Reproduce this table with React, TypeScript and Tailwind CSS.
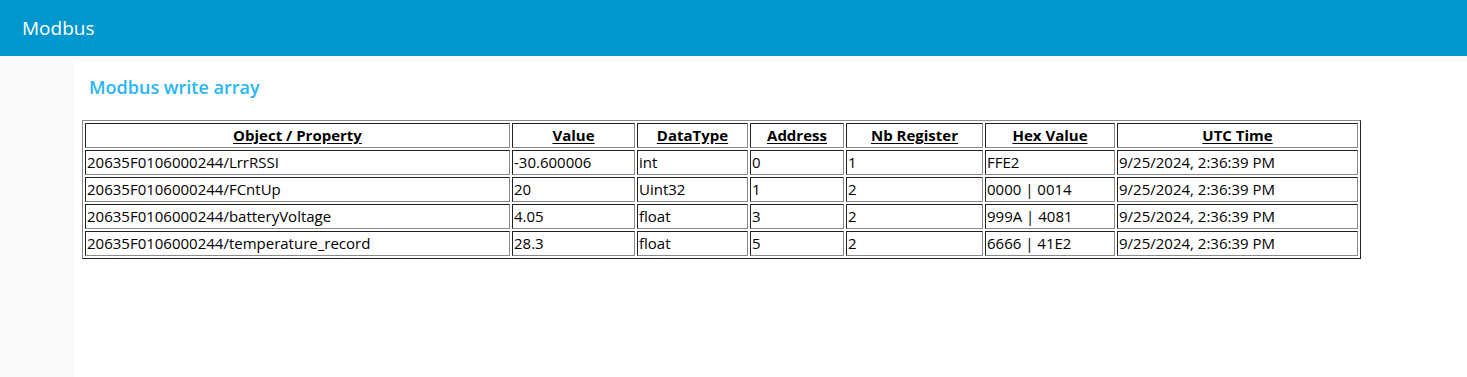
import React from "react";

interface ModbusRow {
  property: string;
  value: string;
  dataType: string;
  address: number;
  nbRegister: number;
  hex: string;
  time: string;
}

const rows: ModbusRow[] = [
  { property: "20635F0106000244/LrrRSSI", value: "-30.600006", dataType: "int", address: 0, nbRegister: 1, hex: "FFE2", time: "9/25/2024, 2:36:39 PM" },
  { property: "20635F0106000244/FCntUp", value: "20", dataType: "Uint32", address: 1, nbRegister: 2, hex: "0000 | 0014", time: "9/25/2024, 2:36:39 PM" },
  { property: "20635F0106000244/batteryVoltage", value: "4.05", dataType: "float", address: 3, nbRegister: 2, hex: "999A | 4081", time: "9/25/2024, 2:36:39 PM" },
  { property: "20635F0106000244/temperature_record", value: "28.3", dataType: "float", address: 5, nbRegister: 2, hex: "6666 | 41E2", time: "9/25/2024, 2:36:39 PM" },
];

const columns = [
  { label: "Object / Property", width: "w-[425px]" },
  { label: "Value", width: "w-[123px]" },
  { label: "DataType", width: "w-[111px]" },
  { label: "Address", width: "w-[94px]" },
  { label: "Nb Register", width: "w-[137px]" },
  { label: "Hex Value", width: "w-[130px]" },
  { label: "UTC Time", width: "w-[241px]" },
];

const cellClass =
  "border border-t-[#222] border-l-[#222] border-b-[#8a8a8a] border-r-[#8a8a8a] p-[1px] leading-[21px] align-middle";

export default function App() {
  return (
    <div className="min-h-[377px] bg-[#fafafa] font-['Open_Sans','Noto_Sans',sans-serif] text-black">
      <header className="flex h-[56px] items-center bg-[#0096ce] pl-[22px]">
        <h1 className="text-[19px] font-normal text-white">Modbus</h1>
      </header>

      <div className="flex">
        <aside className="w-[75px] shrink-0" />
        <main className="mt-[6px] min-h-[315px] flex-1 bg-white pl-[7px]">
          <h2 className="ml-[7px] mt-[12px] text-[18px] font-semibold text-[#29b6f6]">
            Modbus write array
          </h2>

          <table className="mt-[19px] table-fixed border-separate border-spacing-[2px] border border-t-[#8a8a8a] border-l-[#8a8a8a] border-b-[#222] border-r-[#222] text-[15px]">
            <thead>
              <tr>
                {columns.map((col) => (
                  <th
                    key={col.label}
                    className={`${cellClass} ${col.width} text-center font-bold underline underline-offset-2`}
                  >
                    {col.label}
                  </th>
                ))}
              </tr>
            </thead>
            <tbody>
              {rows.map((row) => (
                <tr key={row.property}>
                  <td className={cellClass}>{row.property}</td>
                  <td className={cellClass}>{row.value}</td>
                  <td className={cellClass}>{row.dataType}</td>
                  <td className={cellClass}>{row.address}</td>
                  <td className={cellClass}>{row.nbRegister}</td>
                  <td className={cellClass}>{row.hex}</td>
                  <td className={cellClass}>{row.time}</td>
                </tr>
              ))}
            </tbody>
          </table>
        </main>
      </div>
    </div>
  );
}
